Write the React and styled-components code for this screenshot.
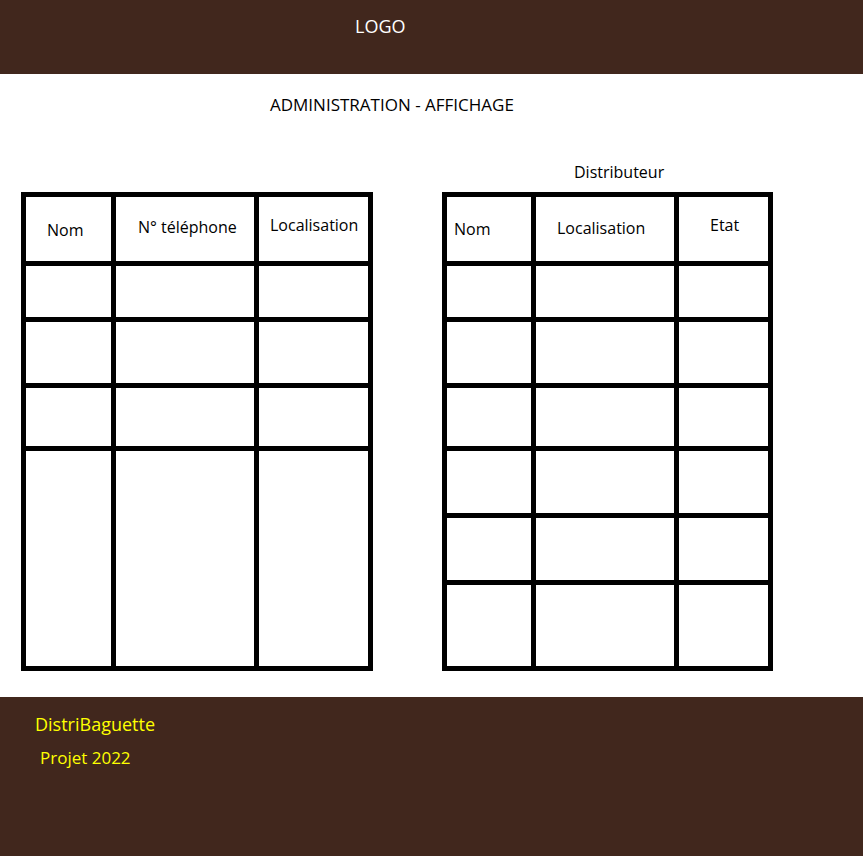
import React from "react";
import styled, { createGlobalStyle } from "styled-components";

const Global = createGlobalStyle`
  html, body { margin: 0; padding: 0; background: #fff; }
  body { font-family: "Open Sans", "Noto Sans", sans-serif; color: #000; }
`;

const Page = styled.div`
  width: 863px;
  min-height: 856px;
  display: flex;
  flex-direction: column;
`;

const Header = styled.header`
  height: 74px;
  box-sizing: border-box;
  background: #41271d;
  padding: 14px 0 0 355px;
`;

const Logo = styled.div`
  color: #fff;
  font-size: 18px;
  line-height: 24px;
`;

const Main = styled.main`
  padding: 20px 0 0 0;
`;

const Title = styled.h1`
  margin: 0 0 0 270px;
  font-size: 17px;
  font-weight: 400;
  line-height: 22px;
`;

const TablesRow = styled.div`
  display: flex;
  align-items: flex-end;
  gap: 69px;
  margin: 45px 0 0 21px;
`;

const Column = styled.section`
  display: flex;
  flex-direction: column;
`;

const Caption = styled.div`
  font-size: 16px;
  line-height: 22px;
  margin: 0 0 9px ${(p) => p.$indent}px;
`;

const Grid = styled.div`
  display: grid;
  grid-template-columns: ${(p) => p.$cols};
  grid-template-rows: ${(p) => p.$rows};
  gap: 5px;
  padding: 5px;
  background: #000;
  width: fit-content;
`;

const Cell = styled.div`
  background: #fff;
`;

const HeadCell = styled(Cell)`
  box-sizing: border-box;
  font-size: 16px;
  line-height: 22px;
  white-space: nowrap;
  padding: ${(p) => p.$pt}px 0 0 ${(p) => p.$pl}px;
`;

const Footer = styled.footer`
  margin-top: 26px;
  height: 159px;
  box-sizing: border-box;
  background: #41271d;
  padding: 15px 0 0 0;
  color: #ffff00;
`;

const Brand = styled.div`
  font-size: 18px;
  line-height: 24px;
  margin-left: 35px;
`;

const Year = styled.div`
  font-size: 17px;
  line-height: 24px;
  margin: 10px 0 0 40px;
`;

const DataTable = ({ cols, rows, heads }) => {
  const bodyRows = rows.length - 1;
  const bodyCells = [];
  for (let r = 0; r < bodyRows; r++) {
    for (let c = 0; c < heads.length; c++) {
      bodyCells.push(<Cell key={`${r}-${c}`} />);
    }
  }
  return (
    <Grid $cols={cols.map((c) => `${c}px`).join(" ")} $rows={rows.map((r) => `${r}px`).join(" ")}>
      {heads.map((h) => (
        <HeadCell key={h.label} $pt={h.pt} $pl={h.pl}>
          {h.label}
        </HeadCell>
      ))}
      {bodyCells}
    </Grid>
  );
};

export default function App() {
  return (
    <Page>
      <Global />
      <Header>
        <Logo>LOGO</Logo>
      </Header>
      <Main>
        <Title>ADMINISTRATION - AFFICHAGE</Title>
        <TablesRow>
          <Column>
            <DataTable
              cols={[85, 138, 109]}
              rows={[64, 51, 61, 58, 215]}
              heads={[
                { label: "Nom", pt: 22, pl: 21 },
                { label: "N° téléphone", pt: 19, pl: 22 },
                { label: "Localisation", pt: 17, pl: 11 },
              ]}
            />
          </Column>
          <Column>
            <Caption $indent={132}>Distributeur</Caption>
            <DataTable
              cols={[84, 138, 89]}
              rows={[64, 51, 61, 58, 62, 62, 81]}
              heads={[
                { label: "Nom", pt: 21, pl: 7 },
                { label: "Localisation", pt: 20, pl: 21 },
                { label: "Etat", pt: 17, pl: 31 },
              ]}
            />
          </Column>
        </TablesRow>
      </Main>
      <Footer>
        <Brand>DistriBaguette</Brand>
        <Year>Projet 2022</Year>
      </Footer>
    </Page>
  );
}
